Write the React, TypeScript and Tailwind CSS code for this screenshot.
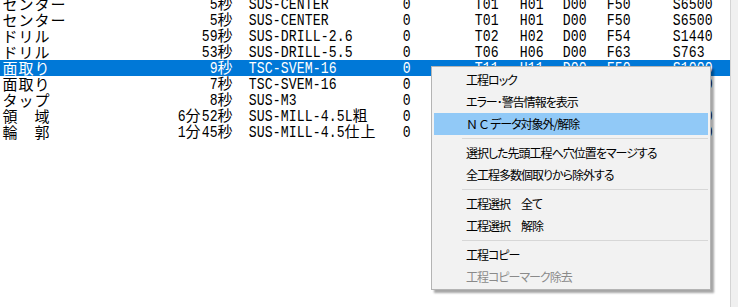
import React from "react";

type Row = {
  name: string;
  time: string;
  tool: string;
  z: string;
  t: string;
  h: string;
  d: string;
  f: string;
  s: string;
  sel?: boolean;
};

const rows: Row[] = [
  { name: "センター", time: "5秒", tool: "SUS-CENTER", z: "0", t: "T01", h: "H01", d: "D00", f: "F50", s: "S6500" },
  { name: "センター", time: "5秒", tool: "SUS-CENTER", z: "0", t: "T01", h: "H01", d: "D00", f: "F50", s: "S6500" },
  { name: "ドリル", time: "59秒", tool: "SUS-DRILL-2.6", z: "0", t: "T02", h: "H02", d: "D00", f: "F54", s: "S1440" },
  { name: "ドリル", time: "53秒", tool: "SUS-DRILL-5.5", z: "0", t: "T06", h: "H06", d: "D00", f: "F63", s: "S763" },
  { name: "面取り", time: "9秒", tool: "TSC-SVEM-16", z: "0", t: "T11", h: "H11", d: "D00", f: "F50", s: "S1000", sel: true },
  { name: "面取り", time: "7秒", tool: "TSC-SVEM-16", z: "0", t: "T11", h: "H11", d: "D00", f: "F50", s: "S1000" },
  { name: "タップ", time: "8秒", tool: "SUS-M3", z: "0", t: "T15", h: "H15", d: "D00", f: "F40", s: "S800" },
  { name: "領\u3000域", time: "6分52秒", tool: "SUS-MILL-4.5L粗", z: "0", t: "T20", h: "H20", d: "D20", f: "F300", s: "S6000" },
  { name: "輪\u3000郭", time: "1分45秒", tool: "SUS-MILL-4.5仕上", z: "0", t: "T21", h: "H21", d: "D21", f: "F300", s: "S6000" },
];

function Mono({ text }: { text: string }) {
  return (
    <>
      {Array.from(text).map((c, i) =>
        c.charCodeAt(0) > 0xff ? (
          <span
            key={i}
            className="inline-block w-4 text-center text-[15px] font-['Noto_Sans_CJK_JP',sans-serif]"
          >
            {c}
          </span>
        ) : (
          <span key={i} className="inline-block w-2 text-center">
            <span className="inline-block scale-x-[0.82] text-[16px] font-['Liberation_Mono',monospace]">
              {c === " " ? "\u00a0" : c}
            </span>
          </span>
        )
      )}
    </>
  );
}

type MenuItem = { label?: React.ReactNode; sep?: boolean; hl?: boolean; dis?: boolean };

const menu: MenuItem[] = [
  { label: "工程ロック" },
  { label: "エラー･警告情報を表示" },
  {
    label: (
      <>
        <span className="tracking-normal [font-feature-settings:normal]">ＮＣ</span>
        データ対象外/解除
      </>
    ),
    hl: true,
  },
  { sep: true },
  { label: "選択した先頭工程へ穴位置をマージする" },
  { label: "全工程多数個取りから除外する" },
  { sep: true },
  { label: "工程選択\u3000全て" },
  { label: "工程選択\u3000解除" },
  { sep: true },
  { label: "工程コピー" },
  { label: "工程コピーマーク除去", dis: true },
];

export default function App() {
  return (
    <div className="relative flex h-[307px] w-[738px] overflow-hidden bg-white">
      <div className="w-[730px] shrink-0 bg-white">
        <div className="-mt-1 flex flex-col">
          {rows.map((r, i) => (
            <div
              key={i}
              className={`flex h-4 items-center whitespace-nowrap pl-[2px] leading-none ${
                r.sel ? "bg-[#0078d7] text-white" : "text-black"
              }`}
            >
              <div className="w-[150px] shrink-0">
                <Mono text={r.name} />
              </div>
              <div className="w-[81px] shrink-0 text-right">
                <Mono text={r.time} />
              </div>
              <div className="ml-[15px] w-[154px] shrink-0">
                <Mono text={r.tool} />
              </div>
              <div className="w-[72px] shrink-0">
                <Mono text={r.z} />
              </div>
              <div className="w-[45px] shrink-0">
                <Mono text={r.t} />
              </div>
              <div className="w-[43px] shrink-0">
                <Mono text={r.h} />
              </div>
              <div className="w-[44px] shrink-0">
                <Mono text={r.d} />
              </div>
              <div className="w-[66px] shrink-0">
                <Mono text={r.f} />
              </div>
              <div className="shrink-0">
                <Mono text={r.s} />
              </div>
            </div>
          ))}
        </div>
      </div>
      <div className="w-px shrink-0 bg-[#d4d4d4]" />
      <div className="flex-1 bg-[#f0f0f0]" />

      <div className="absolute left-[431px] top-[66px] w-[280px] border border-[#b4b4b4] bg-[#f2f2f2] px-[2px] pb-[1px] pt-[2px] shadow-[3px_3px_2px_rgba(0,0,0,0.35)] font-['Noto_Sans_CJK_JP',sans-serif] text-[12px] tracking-[-1px] [font-feature-settings:'palt']">
        {menu.map((m, i) =>
          m.sep ? (
            <div key={i} className="flex h-[7px] items-center">
              <div className="ml-[28px] h-px flex-1 bg-[#d7d7d7]" />
            </div>
          ) : (
            <div
              key={i}
              className={`flex h-[22px] items-center whitespace-nowrap pl-[32px] leading-none ${
                m.hl ? "bg-[#91c9f7]" : ""
              } ${m.dis ? "text-[#8a8a8a]" : "text-black"}`}
            >
              {m.label}
            </div>
          )
        )}
      </div>
    </div>
  );
}
